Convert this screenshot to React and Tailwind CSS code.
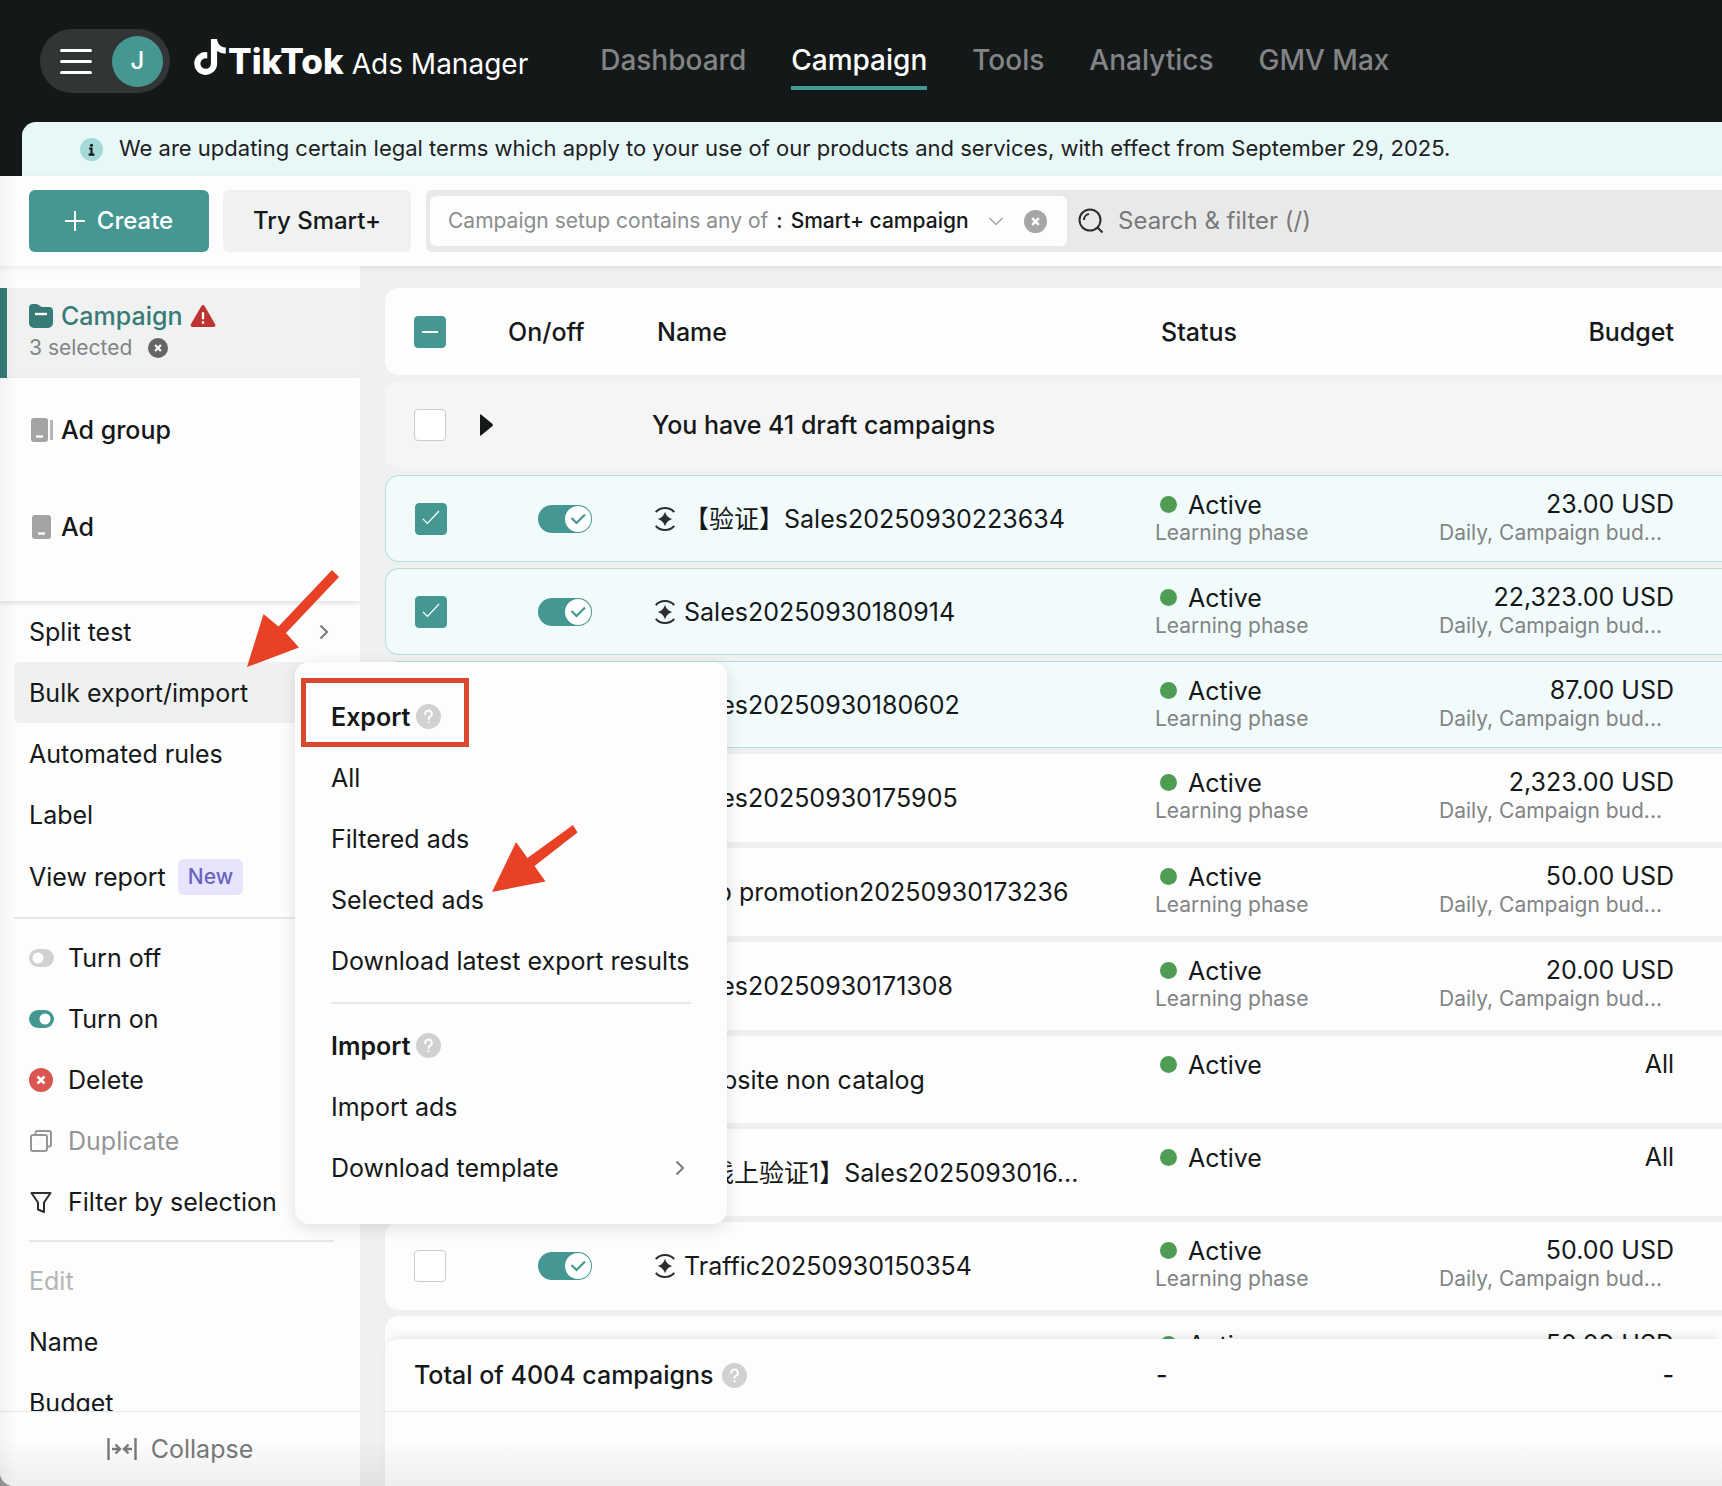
import React from 'react';
import clsx from 'clsx';
import { FaTiktok } from 'react-icons/fa6';

const NAV = ['Dashboard', 'Campaign', 'Tools', 'Analytics', 'GMV Max'];

const CAMPAIGNS = [
  { name: '【验证】Sales20250930223634', budget: '23.00 USD', learning: true, selected: true },
  { name: 'Sales20250930180914', budget: '22,323.00 USD', learning: true, selected: true },
  { name: 'Sales20250930180602', budget: '87.00 USD', learning: true, selected: true },
  { name: 'Sales20250930175905', budget: '2,323.00 USD', learning: true },
  { name: 'App promotion20250930173236', budget: '50.00 USD', learning: true },
  { name: 'Sales20250930171308', budget: '20.00 USD', learning: true },
  { name: 'Website non catalog', budget: 'All' },
  { name: '【线上验证1】Sales2025093016...', budget: 'All' },
  { name: 'Traffic20250930150354', budget: '50.00 USD', learning: true },
  { name: 'Traffic20250930150122', budget: '50.00 USD' },
];

function HelpIcon() {
  return (
    <svg viewBox="0 0 24 24" className="size-[25px] shrink-0" fill="none">
      <circle cx="12" cy="12" r="12" fill="#d0d1d2" />
      <path
        d="M8.8 9.6a3.2 3.2 0 1 1 4.6 2.8c-.9.5-1.4 1-1.4 2.1"
        stroke="#fff"
        strokeWidth="1.8"
        strokeLinecap="round"
      />
      <circle cx="12" cy="17.6" r="1.1" fill="#fff" />
    </svg>
  );
}

function CloseBadge({ className }) {
  return (
    <svg viewBox="0 0 24 24" className={className}>
      <circle cx="12" cy="12" r="12" fill="currentColor" />
      <path d="M8.5 8.5l7 7M15.5 8.5l-7 7" stroke="#fff" strokeWidth="2.6" />
    </svg>
  );
}

function ChevronRight() {
  return (
    <svg viewBox="0 0 10 16" className="h-4 w-[10px]" fill="none" stroke="#77797a" strokeWidth="2">
      <path d="M1.5 1.5L8 8l-6.500 6.500" />
    </svg>
  );
}

function MiniToggle({ on }) {
  return (
    <svg viewBox="0 0 25 18" className="h-[18px] w-[25px]">
      <rect width="25" height="18" rx="9" fill={on ? '#459792' : '#d0d1d2'} />
      <circle cx={on ? 16 : 9} cy="9" r="5.500" fill="#fff" />
    </svg>
  );
}

function DuplicateIcon() {
  return (
    <svg viewBox="0 0 24 24" className="size-6" fill="none" stroke="#949596" strokeWidth="2">
      <rect x="2" y="6" width="16" height="16" rx="2" />
      <path d="M6.500 6V4a2 2 0 0 1 2-2H20a2 2 0 0 1 2 2v11.500a2 2 0 0 1-2 2h-2" />
    </svg>
  );
}

function FilterIcon() {
  return (
    <svg viewBox="0 0 24 24" className="size-6" fill="none" stroke="#2b2d2e" strokeWidth="2" strokeLinejoin="round">
      <path d="M2.500 3h19l-6.500 9.500V22l-6-2.500v-7z" />
    </svg>
  );
}

function SmartIcon() {
  return (
    <svg viewBox="0 0 24 28" className="h-[26px] w-[22px] shrink-0" fill="none">
      <path d="M2 6.500C4.500 3.500 8 2 12 2s7.500 1.500 10 4.500M2 21.500c2.500 3 6 4.500 10 4.500s7.500-1.500 10-4.500" stroke="#2b2d2e" strokeWidth="2.400" />
      <path d="M12 6c1.500 4.500 3.500 6.500 8 8-4.500 1.500-6.500 3.500-8 8-1.500-4.500-3.500-6.500-8-8 4.500-1.500 6.500-3.500 8-8z" fill="#2b2d2e" />
    </svg>
  );
}

function Checkbox({ label, checked, mixed }) {
  return (
    <label className="grid size-8 place-items-center">
      <input
        type="checkbox"
        aria-label={label}
        defaultChecked={checked || mixed}
        className="size-8 appearance-none rounded-sm border border-[#c9cbcc] bg-white [grid-area:1/1] checked:border-[#459792] checked:bg-[#459792]"
      />
      {mixed && <span className="h-[2px] w-4 bg-white [grid-area:1/1]" />}
      {checked && (
        <svg viewBox="0 0 20 20" className="pointer-events-none size-5 [grid-area:1/1]" fill="none">
          <path d="M2 10l4.500 4.500L18 2" stroke="#fff" strokeWidth="1.200" />
        </svg>
      )}
    </label>
  );
}

function Toggle({ label }) {
  return (
    <label className="grid h-7 w-[54px] items-center justify-items-end">
      <input
        type="checkbox"
        role="switch"
        aria-label={label}
        defaultChecked
        className="h-7 w-[54px] appearance-none rounded-full bg-[#459792] [grid-area:1/1]"
      />
      <svg viewBox="0 0 26 26" className="pointer-events-none mr-px size-[26px] [grid-area:1/1]" fill="none">
        <circle cx="13" cy="13" r="13" fill="#fff" />
        <path d="M6.500 12l5 5 8.500-8.500" stroke="#459792" strokeWidth="2.200" />
      </svg>
    </label>
  );
}

function Header() {
  return (
    <header className="bg-[#151818]">
      <div className="flex h-[122px] items-center pl-10">
        <div className="flex h-16 w-[130px] items-center justify-between rounded-full bg-[#323535] pl-5 pr-[7px]">
          <button type="button" aria-label="Open menu" className="flex w-8 flex-col gap-2">
            <span className="h-[3px] rounded-full bg-white" />
            <span className="h-[3px] rounded-full bg-white" />
            <span className="h-[3px] rounded-full bg-white" />
          </button>
          <button type="button" className="size-[51px] rounded-full bg-[#459792] text-2xl font-medium text-white">
            J
          </button>
        </div>
        <a href="#home" className="ml-[22px] flex items-baseline text-white">
          <FaTiktok className="mb-2 size-9 self-center" />
          <span className="text-[35px] font-extrabold">TikTok</span>
          <span className="ml-2 text-[28px]">Ads Manager</span>
        </a>
        <nav className="ml-[72px] flex gap-[45px] text-[28px] font-medium leading-10">
          {NAV.map((item) => (
            <a
              key={item}
              href={`#${item}`}
              className={clsx(
                'border-b-4 pt-2 pb-[6px]',
                item === 'Campaign' ? 'border-[#459792] text-white' : 'border-transparent text-[#828485]'
              )}
            >
              {item}
            </a>
          ))}
        </nav>
      </div>
      <div className="ml-[22px] flex h-[54px] items-center gap-4 rounded-tl-[14px] bg-[#e8f8f8] pl-[58px] text-[22px] text-[#1c2222]">
        <svg viewBox="0 0 24 24" className="size-[23px]">
          <circle cx="12" cy="12" r="12" fill="#a5dad8" />
          <circle cx="12" cy="7.500" r="1.600" fill="#151818" />
          <path d="M9.500 11H12v6M9 17.300h6" stroke="#151818" strokeWidth="2.200" fill="none" />
        </svg>
        <p>
          We are updating certain legal terms which apply to your use of our products and services, with effect from
          September 29, 2025.
        </p>
      </div>
    </header>
  );
}

function Toolbar() {
  return (
    <div className="relative z-10 flex h-[90px] items-center bg-[#fdfdfd] pl-[29px] text-2xl font-medium shadow-[0_2px_6px_rgba(0,0,0,0.08)]">
      <button
        type="button"
        className="flex h-[62px] w-[180px] items-center justify-center gap-3 rounded-md bg-[#459792] text-white"
      >
        <svg viewBox="0 0 20 20" className="size-5" stroke="currentColor" strokeWidth="2">
          <path d="M10 0v20M0 10h20" />
        </svg>
        Create
      </button>
      <button type="button" className="ml-[14px] h-[62px] w-[188px] rounded-md bg-[#f0f1f1]">
        Try Smart+
      </button>
      <div className="ml-[15px] flex h-[62px] flex-1 items-center rounded-l-md bg-[#e9e9e9] pl-1">
        <div className="flex h-[50px] w-[637px] shrink-0 items-center justify-between whitespace-nowrap rounded-md bg-[#fdfdfd] pl-[18px] pr-5 text-[21px]">
          <button type="button" className="flex items-center">
            <span className="font-normal text-[#8b8d8e]">Campaign setup contains any of</span>
            <span className="mx-2">:</span>
            <span>Smart+ campaign</span>
            <svg viewBox="0 0 14 9" className="ml-5 h-[9px] w-[14px]" fill="none" stroke="#a5a6a7" strokeWidth="1.500">
              <path d="M0.500 1l6.500 6.500L13.500 1" />
            </svg>
          </button>
          <button type="button" aria-label="Remove filter">
            <CloseBadge className="size-[23px] text-[#a5a6a7]" />
          </button>
        </div>
        <svg viewBox="0 0 26 26" className="ml-[11px] size-[26px] shrink-0" fill="none" stroke="#2b2d2e" strokeWidth="2">
          <circle cx="12" cy="12" r="10.500" />
          <path d="M19.500 19.500l5 5M6 12a6 6 0 0 1 5-6" />
        </svg>
        <input
          type="text"
          aria-label="Search and filter"
          placeholder="Search & filter (/)"
          className="ml-[14px] min-w-0 flex-1 bg-transparent font-normal outline-none placeholder:text-[#77797a]"
        />
      </div>
    </div>
  );
}

function MenuItem({ children, active, tall, muted, icon }) {
  return (
    <li>
      <button
        type="button"
        className={clsx(
          'flex w-full items-center rounded-md px-[15px] text-left',
          tall ? 'h-16' : 'h-[61px]',
          active && 'bg-[#eff1f1]',
          muted
        )}
      >
        {icon && <span className="flex w-[39px] shrink-0">{icon}</span>}
        {children}
      </button>
    </li>
  );
}

function Sidebar() {
  return (
    <aside className="flex w-[360px] shrink-0 flex-col overflow-hidden bg-[#fdfdfd] pt-[22px] text-[25px] leading-8">
      <div className="h-[90px] shrink-0 border-l-[7px] border-[#367b76] bg-[#f0f2f2] pl-[22px] pt-3">
        <a href="#campaign" className="flex h-8 items-center font-medium text-[#367b76]">
          <svg viewBox="0 0 24 24" className="mr-2 size-6">
            <path d="M0 4a4 4 0 0 1 4-4h3q2 0 3.500 1.500T14 3h6a4 4 0 0 1 4 4v12a5 5 0 0 1-5 5H5a5 5 0 0 1-5-5z" fill="currentColor" />
            <path d="M6 10h12" stroke="#fff" strokeWidth="2.400" />
          </svg>
          Campaign
          <svg viewBox="0 0 26 23" className="ml-2 h-[22px] w-[26px]">
            <path d="M11.300 1a2 2 0 0 1 3.400 0l11 19a2 2 0 0 1-1.700 3H2a2 2 0 0 1-1.700-3z" fill="#bd3431" />
            <path d="M13 7.500v7.500M13 17v2.500" stroke="#fff" strokeWidth="2.400" />
          </svg>
        </a>
        <div className="flex h-8 items-center text-[21px] text-[#828485]">
          3 selected
          <button type="button" aria-label="Clear selection" className="ml-4">
            <CloseBadge className="size-5 text-[#646667]" />
          </button>
        </div>
      </div>
      <div className="h-[223px] shrink-0 pl-[30px] pt-[3px] font-medium shadow-[0_2px_5px_rgba(0,0,0,0.12)]">
        <a href="#adgroup" className="flex h-[97px] items-center gap-2">
          <svg viewBox="0 0 23 24" className="h-6 w-[23px]">
            <rect x="1" width="17" height="24" rx="3" fill="#a3a4a5" />
            <path d="M6 18.500h7" stroke="#fff" strokeWidth="2.400" />
            <path d="M21.500 2v20" stroke="#b4b5b6" strokeWidth="3" />
          </svg>
          Ad group
        </a>
        <a href="#ad" className="flex h-[97px] items-center gap-2">
          <svg viewBox="0 0 23 24" className="h-6 w-[23px]">
            <rect x="2" width="19" height="24" rx="3" fill="#a3a4a5" />
            <path d="M8 18.500h7" stroke="#fff" strokeWidth="2.400" />
          </svg>
          Ad
        </a>
      </div>
      <ul className="min-h-0 flex-1 overflow-hidden pl-[14px] pr-[10px]">
        <MenuItem>
          <span className="flex-1">Split test</span>
          <span className="pr-[6px]">
            <ChevronRight />
          </span>
        </MenuItem>
        <MenuItem active>Bulk export/import</MenuItem>
        <MenuItem>Automated rules</MenuItem>
        <MenuItem>Label</MenuItem>
        <MenuItem tall>
          View report
          <span className="ml-3 h-9 rounded-md bg-[#e6e5fb] px-[10px] text-[21px] font-medium leading-9 text-[#6a64bf]">
            New
          </span>
        </MenuItem>
        <li className="my-2 h-[2px] bg-[#e6e7e8]" />
        <MenuItem icon={<MiniToggle />}>Turn off</MenuItem>
        <MenuItem icon={<MiniToggle on />}>Turn on</MenuItem>
        <MenuItem icon={<CloseBadge className="size-6 text-[#d95750]" />}>Delete</MenuItem>
        <MenuItem icon={<DuplicateIcon />} muted="text-[#949596]">
          Duplicate
        </MenuItem>
        <MenuItem icon={<FilterIcon />}>Filter by selection</MenuItem>
        <li className="my-2 ml-[15px] mr-4 h-[2px] bg-[#e6e7e8]" />
        <MenuItem muted="text-[#b4b5b6]">Edit</MenuItem>
        <MenuItem>Name</MenuItem>
        <MenuItem>Budget</MenuItem>
      </ul>
      <button
        type="button"
        className="flex h-[75px] shrink-0 items-center justify-center gap-[14px] border-t border-[#e4e5e6] text-[#77797a]"
      >
        <svg viewBox="0 0 30 22" className="h-[22px] w-[30px]" fill="none" stroke="currentColor" strokeWidth="2.400">
          <path d="M1.500 0v22M28.500 0v22M5 11h7M8.500 6.500L13 11l-4.500 4.500M25 11h-7M21.500 6.500L17 11l4.500 4.500" />
        </svg>
        Collapse
      </button>
    </aside>
  );
}

function CampaignRow({ campaign }) {
  const { name, budget, learning, selected } = campaign;
  const cell = clsx(
    learning && !selected ? 'h-[88px]' : 'h-[87px]',
    'py-0',
    selected ? 'border-y border-[#b4dedc] bg-[#f1fbfb]' : 'bg-[#fdfdfd]'
  );
  return (
    <tr>
      <td className={clsx(cell, 'rounded-l-[14px] pl-[29px]', selected && 'border-l')}>
        <Checkbox label={`Select ${name}`} checked={selected} />
      </td>
      <td className={clsx(cell, 'pl-[58px]')}>
        <Toggle label={`${name} on/off`} />
      </td>
      <td className={clsx(cell, 'pl-3')}>
        <div className="flex items-center gap-2 whitespace-nowrap">
          <SmartIcon />
          {name}
        </div>
      </td>
      <td className={clsx(cell, 'pl-3 pt-[14px] align-top')}>
        <div className="flex h-[29px] items-center gap-[11px] pl-[5px]">
          <span className="size-[17px] rounded-full bg-[#4f9d53]" />
          Active
        </div>
        {learning && <div className="text-[21px] leading-7 text-[#828485]">Learning phase</div>}
      </td>
      <td className={clsx(cell, 'pr-12 pt-[14px] text-right align-top')}>
        <div className="h-[29px] leading-[29px]">{budget}</div>
        {learning && <div className="pr-3 text-[21px] leading-7 text-[#828485]">Daily, Campaign bud...</div>}
      </td>
    </tr>
  );
}

function CampaignTable() {
  const head = 'h-[87px] bg-[#fdfdfd] p-0 text-left font-medium';
  const draft = 'h-[88px] bg-[#f5f5f5] p-0';
  return (
    <table className="w-full table-fixed border-separate border-spacing-x-0 border-spacing-y-[6px] text-[25px] leading-8">
      <colgroup>
        <col className="w-[95px]" />
        <col className="w-[162px]" />
        <col />
        <col className="w-[220px]" />
        <col className="w-[359px]" />
      </colgroup>
      <thead>
        <tr>
          <th className={clsx(head, 'rounded-l-[14px] pl-[29px]')}>
            <Checkbox label="Select all campaigns" mixed />
          </th>
          <th className={clsx(head, 'pl-7')}>On/off</th>
          <th className={clsx(head, 'pl-[15px]')}>Name</th>
          <th className={clsx(head, 'pl-[18px]')}>Status</th>
          <th className={clsx(head, 'pr-12 text-right')}>Budget</th>
        </tr>
      </thead>
      <tbody>
        <tr>
          <td className={clsx(draft, 'rounded-l-[14px] pl-[29px]')}>
            <Checkbox label="Select draft campaigns" />
          </td>
          <td className={draft}>
            <button type="button" aria-label="Show drafts" className="block">
              <svg viewBox="0 0 13 22" className="h-[22px] w-[13px]">
                <path d="M0 1q0-1 1-.5L12.500 10q.8 1 0 2L1 21.500Q0 22 0 21z" fill="#151818" />
              </svg>
            </button>
          </td>
          <td className={clsx(draft, 'pl-[10px] font-medium')}>You have 41 draft campaigns</td>
          <td className={draft} />
          <td className={draft} />
        </tr>
        {CAMPAIGNS.map((campaign) => (
          <CampaignRow key={campaign.name} campaign={campaign} />
        ))}
      </tbody>
    </table>
  );
}

function ExportMenu() {
  const item = 'flex h-[61px] w-full items-center whitespace-nowrap text-left';
  return (
    <div className="absolute left-[295px] top-[396px] z-20 w-[432px] rounded-[14px] bg-[#fdfdfd] px-9 pb-[26px] pt-6 text-[25px] leading-8 shadow-[0_4px_16px_rgba(0,0,0,0.12)]">
      <h3 className="flex h-[61px] items-center gap-[6px] font-semibold">
        Export <HelpIcon />
      </h3>
      <button type="button" className={item}>All</button>
      <button type="button" className={item}>Filtered ads</button>
      <button type="button" className={item}>Selected ads</button>
      <button type="button" className={item}>Download latest export results</button>
      <hr className="my-[11px] border-t-2 border-[#e6e7e8]" />
      <h3 className="flex h-[61px] items-center gap-[6px] font-semibold">
        Import <HelpIcon />
      </h3>
      <button type="button" className={item}>Import ads</button>
      <button type="button" className={clsx(item, 'justify-between pr-[6px]')}>
        Download template
        <ChevronRight />
      </button>
    </div>
  );
}

// Red callouts that point at the export steps
function Callouts() {
  return (
    <svg viewBox="0 0 600 340" className="pointer-events-none absolute left-0 top-[296px] z-30 h-[340px] w-[600px]">
      <path d="M247 105L263.500 52l15 12.500L332 8l7 7-53 56 13 14.500z" fill="#e84126" />
      <path d="M492 330l24-50 11.500 16L573 263l4.500 7.500L534.500 304l11 15.500z" fill="#e84126" />
      <rect x="303.500" y="118.500" width="163" height="64" fill="none" stroke="#d9482f" strokeWidth="5" />
    </svg>
  );
}

export default function App() {
  return (
    <div className="bg-[#8f9090]">
      <div className="relative flex h-screen flex-col overflow-hidden rounded-bl-[14px] bg-[#eff1f1] font-['Inter','Noto_Sans_CJK_SC',sans-serif] text-2xl text-[#151818]">
        <Header />
        <Toolbar />
        <div className="relative flex min-h-0 flex-1">
          <Sidebar />
          <main className="ml-[25px] flex min-w-0 flex-1 flex-col pt-4">
            <div className="min-h-0 flex-1 overflow-hidden">
              <CampaignTable />
            </div>
            <footer className="relative -mt-3 shrink-0 rounded-tl-[14px] bg-[#fdfdfd] text-[25px] leading-8 shadow-[0_-6px_10px_-4px_rgba(0,0,0,0.1)]">
              <div className="flex h-[73px] items-center border-b border-[#e4e5e6] pl-[29px] pr-12 font-medium">
                <span className="flex flex-1 items-center gap-2">
                  Total of 4004 campaigns <HelpIcon />
                </span>
                <span className="w-[506px]">-</span>
                <span className="w-3 text-right">-</span>
              </div>
              <div className="h-[74px]" />
            </footer>
          </main>
          <ExportMenu />
          <Callouts />
        </div>
        <div className="pointer-events-none absolute inset-x-0 bottom-0 z-40 h-12 bg-linear-to-t from-black/6 to-transparent" />
        <div className="pointer-events-none absolute bottom-0 left-0 top-[176px] z-40 w-4 bg-linear-to-r from-black/4 to-transparent" />
      </div>
    </div>
  );
}
